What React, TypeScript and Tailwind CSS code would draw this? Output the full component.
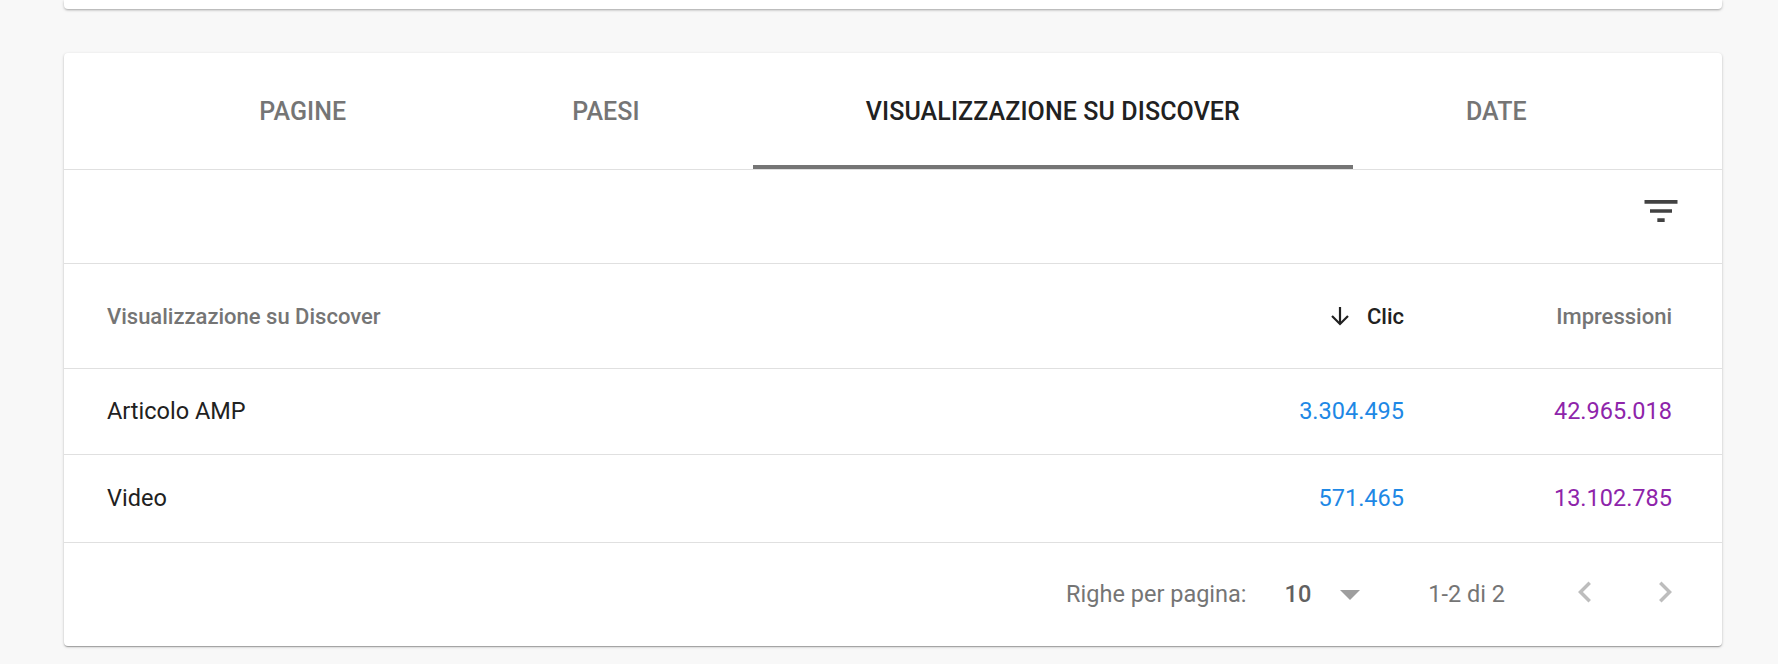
import React from "react";

const tabs = [
  { label: "PAGINE", active: false },
  { label: "PAESI", active: false },
  { label: "VISUALIZZAZIONE SU DISCOVER", active: true },
  { label: "DATE", active: false },
];

const rows = [
  { name: "Articolo AMP", clic: "3.304.495", impr: "42.965.018" },
  { name: "Video", clic: "571.465", impr: "13.102.785" },
];

function FilterIcon() {
  return (
    <svg width="44" height="44" viewBox="0 0 24 24" fill="#424242">
      <path d="M10 18h4v-2h-4v2zM3 6v2h18V6H3zm3 7h12v-2H6v2z" />
    </svg>
  );
}

function ArrowDown() {
  return (
    <svg width="22" height="22" viewBox="0 0 22 22" fill="none" stroke="#212121" strokeWidth="2.2">
      <path d="M11 2v17" />
      <path d="M3 11l8 8 8-8" />
    </svg>
  );
}

function DropTriangle() {
  return (
    <svg width="20" height="10" viewBox="0 0 20 10" fill="#9e9e9e">
      <path d="M0 0h20L10 10z" />
    </svg>
  );
}

function ChevronLeft() {
  return (
    <svg width="42" height="42" viewBox="0 0 24 24" fill="#bdbdbd">
      <path d="M15.41 7.41L14 6l-6 6 6 6 1.41-1.41L10.83 12z" />
    </svg>
  );
}

function ChevronRight() {
  return (
    <svg width="42" height="42" viewBox="0 0 24 24" fill="#bdbdbd">
      <path d="M10 6L8.59 7.41 13.17 12l-4.58 4.59L10 18l6-6z" />
    </svg>
  );
}

export default function App() {
  return (
    <div
      className="min-h-[664px] w-full bg-[#f8f8f8] pl-[64px] pr-[56px]"
      style={{ fontFamily: "Roboto, 'Liberation Sans', sans-serif" }}
    >
      <div className="h-[9px] rounded-b-[4px] bg-white shadow-[0_1px_3px_rgba(0,0,0,0.25),0_2px_2px_-1px_rgba(0,0,0,0.12)]" />

      <div className="mt-[44px] rounded-[4px] bg-white shadow-[0_1px_3px_rgba(0,0,0,0.22),0_1px_1px_rgba(0,0,0,0.14),0_2px_1px_-1px_rgba(0,0,0,0.12)]">
        {/* Tabs */}
        <div className="flex h-[117px] justify-center border-b border-[#e0e0e0]">
          {tabs.map((t) => (
            <div
              key={t.label}
              className={
                "relative flex items-center justify-center px-[113px] text-[25px] font-medium tracking-[0.1px] " +
                (t.active ? "text-[#212121]" : "text-[#757575]")
              }
            >
              <span className="pt-[1px]">{t.label}</span>
              {t.active && (
                <div className="absolute bottom-0 left-0 right-0 h-[4px] bg-[#757575]" />
              )}
            </div>
          ))}
        </div>

        {/* Filter row */}
        <div className="flex h-[94px] justify-end border-b border-[#e0e0e0] pr-[39px] pt-[19px]">
          <FilterIcon />
        </div>

        {/* Header */}
        <div className="flex h-[105px] items-center border-b border-[#e0e0e0] pl-[43px] pr-[50px] text-[22px] font-medium">
          <div className="flex-1 text-[#757575]">Visualizzazione su Discover</div>
          <div className="flex items-center gap-[16px] text-[#212121]">
            <ArrowDown />
            <span>Clic</span>
          </div>
          <div className="w-[268px] text-right text-[#757575]">Impressioni</div>
        </div>

        {/* Rows */}
        {rows.map((r, i) => (
          <div
            key={r.name}
            className={
              "flex items-center border-b border-[#e0e0e0] pl-[43px] pr-[50px] text-[23.5px] " +
              (i === 0 ? "h-[86px]" : "h-[88px]")
            }
          >
            <div className="flex-1 text-[#212121]">{r.name}</div>
            <div className="text-[#1e88e5]">{r.clic}</div>
            <div className="w-[268px] text-right text-[#8e24aa]">{r.impr}</div>
          </div>
        ))}

        {/* Footer */}
        <div className="flex h-[103px] items-center justify-end pr-[36px] text-[23.5px] text-[#757575]">
          <span>Righe per pagina:</span>
          <span className="ml-[38px] font-medium text-[#616161]">10</span>
          <span className="ml-[29px]">
            <DropTriangle />
          </span>
          <span className="ml-[68px]">1-2 di 2</span>
          <span className="ml-[59px] -mt-[6px]">
            <ChevronLeft />
          </span>
          <span className="ml-[38px] -mt-[6px]">
            <ChevronRight />
          </span>
        </div>
      </div>
    </div>
  );
}
